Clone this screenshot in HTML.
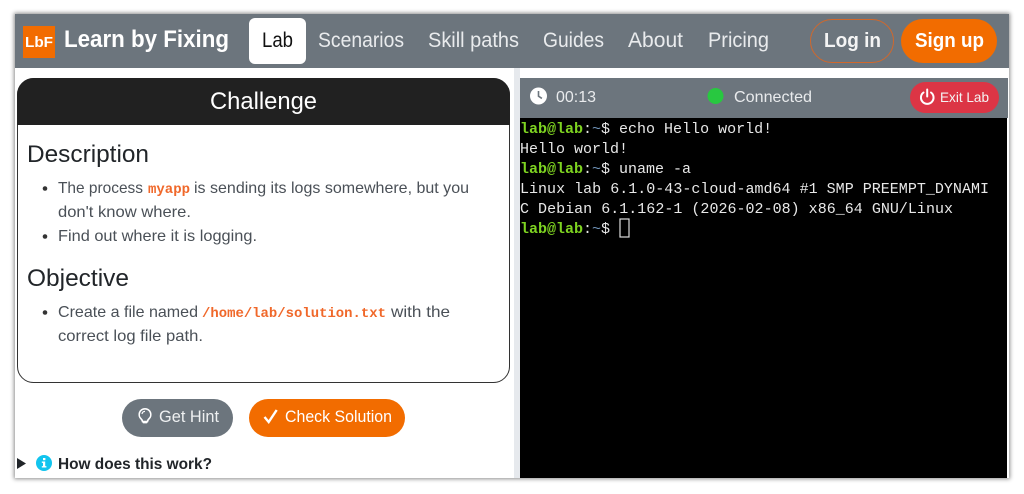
<!DOCTYPE html>
<html lang="en"><head><meta charset="utf-8"><title>Learn by Fixing</title>
<style>
html,body{margin:0;padding:0;width:1024px;height:494px;background:#fff;overflow:hidden}
#win{position:absolute;left:15px;top:14px;width:994px;height:464px;box-shadow:0 0 4px 1px rgba(0,0,0,.45)}
svg{position:absolute;left:0;top:0}
text{font-family:"Liberation Sans",sans-serif;white-space:pre}
.nav{font-size:21px;fill:#e9ebed}
.b{font-weight:bold}
.body{font-size:16px;fill:#4a5057}
.h{font-size:24px;fill:#212529}
.m{font-family:"Liberation Mono",monospace;font-size:14px;font-weight:bold;fill:#f0682a}
.t{font-family:"Liberation Mono",monospace;font-size:15px;fill:#e8e8e8}
.g{fill:#7ed321;font-weight:bold}
.c{fill:#6f93b8}
</style></head><body>
<div id="win"></div>
<svg width="1024" height="494" viewBox="0 0 1024 494" xmlns="http://www.w3.org/2000/svg">
<rect x="15" y="14" width="994" height="464" fill="#fff"/>
<rect x="15" y="14" width="994" height="54" fill="#6c757d"/>
<rect x="23" y="26" width="32" height="32" fill="#f26c00"/>
<text x="25" y="47" font-size="15" class="b" fill="#fff" textLength="28" lengthAdjust="spacingAndGlyphs">LbF</text>
<text x="64" y="47" font-size="24" class="b" fill="#fff" textLength="165" lengthAdjust="spacingAndGlyphs">Learn by Fixing</text>
<rect x="249" y="18" width="57" height="46" rx="6" fill="#fff"/>
<text x="262" y="47" font-size="21" fill="#111" textLength="31" lengthAdjust="spacingAndGlyphs">Lab</text>
<text x="318" y="47" class="nav" textLength="86" lengthAdjust="spacingAndGlyphs">Scenarios</text>
<text x="428" y="47" class="nav" textLength="91" lengthAdjust="spacingAndGlyphs">Skill paths</text>
<text x="543" y="47" class="nav" textLength="61" lengthAdjust="spacingAndGlyphs">Guides</text>
<text x="628" y="47" class="nav" textLength="55" lengthAdjust="spacingAndGlyphs">About</text>
<text x="708" y="47" class="nav" textLength="61" lengthAdjust="spacingAndGlyphs">Pricing</text>
<rect x="810.5" y="19.5" width="83" height="43" rx="21.5" fill="none" stroke="#d0682c" stroke-width="1"/>
<text x="824" y="47" font-size="20" class="b" fill="#f4f4f4" textLength="57" lengthAdjust="spacingAndGlyphs">Log in</text>
<rect x="901" y="19" width="96" height="44" rx="22" fill="#f26c00"/>
<text x="915" y="47" font-size="20" class="b" fill="#fff" textLength="69" lengthAdjust="spacingAndGlyphs">Sign up</text>

<!-- challenge card -->
<rect x="17.5" y="78.5" width="492" height="304" rx="16" fill="#fff" stroke="#333"/>
<path d="M17 125V95a17 17 0 0 1 17-17H493a17 17 0 0 1 17 17V125Z" fill="#212121"/>
<text x="210" y="109" font-size="24" fill="#fff" textLength="107" lengthAdjust="spacingAndGlyphs">Challenge</text>
<text x="27" y="162" class="h" textLength="122" lengthAdjust="spacingAndGlyphs">Description</text>
<circle cx="45" cy="188.5" r="2.3" fill="#333"/>
<text x="58" y="193" class="body" textLength="85" lengthAdjust="spacingAndGlyphs">The process</text>
<text x="148" y="193" class="m" textLength="42" lengthAdjust="spacingAndGlyphs">myapp</text>
<text x="194" y="193" class="body" textLength="275" lengthAdjust="spacingAndGlyphs">is sending its logs somewhere, but you</text>
<text x="58" y="217" class="body" textLength="133" lengthAdjust="spacingAndGlyphs">don't know where.</text>
<circle cx="45" cy="236.5" r="2.3" fill="#333"/>
<text x="58" y="241" class="body" textLength="199" lengthAdjust="spacingAndGlyphs">Find out where it is logging.</text>
<text x="27" y="286" class="h" textLength="102" lengthAdjust="spacingAndGlyphs">Objective</text>
<circle cx="45" cy="312.5" r="2.3" fill="#333"/>
<text x="58" y="317" class="body" textLength="140" lengthAdjust="spacingAndGlyphs">Create a file named</text>
<text x="202" y="317" class="m" textLength="184" lengthAdjust="spacingAndGlyphs">/home/lab/solution.txt</text>
<text x="391" y="317" class="body" textLength="59" lengthAdjust="spacingAndGlyphs">with the</text>
<text x="58" y="341" class="body" textLength="145" lengthAdjust="spacingAndGlyphs">correct log file path.</text>

<!-- buttons -->
<rect x="122" y="399" width="111" height="38" rx="19" fill="#6c757d"/>
<path d="M145 408.8a5.8 5.8 0 0 0-3.8 10.2c.8.8 1.2 1.6 1.3 2.5h5c.1-.9.5-1.7 1.3-2.5a5.8 5.8 0 0 0-3.8-10.2Z" fill="none" stroke="#fff" stroke-width="1.6"/>
<rect x="142.5" y="421" width="5" height="2.4" rx="1" fill="#fff"/>
<path d="M142 414a3 3 0 0 1 3-2.6" fill="none" stroke="#fff" stroke-width="1.2"/>
<text x="159" y="422" font-size="16.5" fill="#eef0f1" textLength="60" lengthAdjust="spacingAndGlyphs">Get Hint</text>
<rect x="249" y="399" width="156" height="38" rx="19" fill="#f26c00"/>
<path d="M264.5 417l4.2 5 8-12" fill="none" stroke="#fff" stroke-width="2.4"/>
<text x="285" y="422" font-size="16.5" fill="#fff" textLength="107" lengthAdjust="spacingAndGlyphs">Check Solution</text>
<path d="M17 458l9 5.5-9 5.5Z" fill="#212529"/>
<circle cx="44" cy="463" r="8" fill="#12c4ee"/>
<rect x="43" y="458" width="2.4" height="2.2" fill="#fff"/>
<path d="M41.8 461.5h3.4v4.6h1.2v1.4h-4.6v-1.4h1.2v-3.2h-1.2Z" fill="#fff"/>
<text x="58" y="469" font-size="16" class="b" fill="#212529" textLength="154" lengthAdjust="spacingAndGlyphs">How does this work?</text>

<!-- divider + terminal -->
<rect x="514" y="68" width="6" height="410" fill="#e6e9ed"/>
<rect x="520" y="78" width="488" height="40" fill="#6c757d"/>
<rect x="520" y="118" width="487" height="360" fill="#000"/>
<circle cx="538.5" cy="96" r="8.5" fill="#fff"/>
<path d="M538.5 91v5.2l3.4 2.2" fill="none" stroke="#6c757d" stroke-width="1.6"/>
<text x="556" y="102" font-size="16" fill="#e9ebed" textLength="40" lengthAdjust="spacingAndGlyphs">00:13</text>
<circle cx="715.5" cy="96" r="8" fill="#28c840"/>
<text x="734" y="102" font-size="16" fill="#e9ebed" textLength="78" lengthAdjust="spacingAndGlyphs">Connected</text>
<rect x="910" y="82" width="89" height="31" rx="15.5" fill="#dc3545"/>
<path d="M923.5 92.5a6.3 6.3 0 1 0 7.5 0" fill="none" stroke="#fff" stroke-width="2" stroke-linecap="round"/>
<path d="M927.2 89.5v7" stroke="#fff" stroke-width="2" stroke-linecap="round"/>
<text x="940" y="102" font-size="14" fill="#f4f4f4" textLength="49" lengthAdjust="spacingAndGlyphs">Exit Lab</text>

<text x="520" y="133" class="t"><tspan class="g">lab@lab</tspan><tspan>:</tspan><tspan class="c">~</tspan><tspan>$ echo Hello world!</tspan></text>
<text x="520" y="153" class="t">Hello world!</text>
<text x="520" y="173" class="t"><tspan class="g">lab@lab</tspan><tspan>:</tspan><tspan class="c">~</tspan><tspan>$ uname -a</tspan></text>
<text x="520" y="193" class="t" textLength="469">Linux lab 6.1.0-43-cloud-amd64 #1 SMP PREEMPT_DYNAMI</text>
<text x="520" y="213" class="t" textLength="433">C Debian 6.1.162-1 (2026-02-08) x86_64 GNU/Linux</text>
<text x="520" y="233" class="t"><tspan class="g">lab@lab</tspan><tspan>:</tspan><tspan class="c">~</tspan><tspan>$ </tspan></text>
<rect x="620" y="219" width="9" height="18" fill="none" stroke="#ddd" stroke-width="1.2"/>
</svg>
</body></html>
